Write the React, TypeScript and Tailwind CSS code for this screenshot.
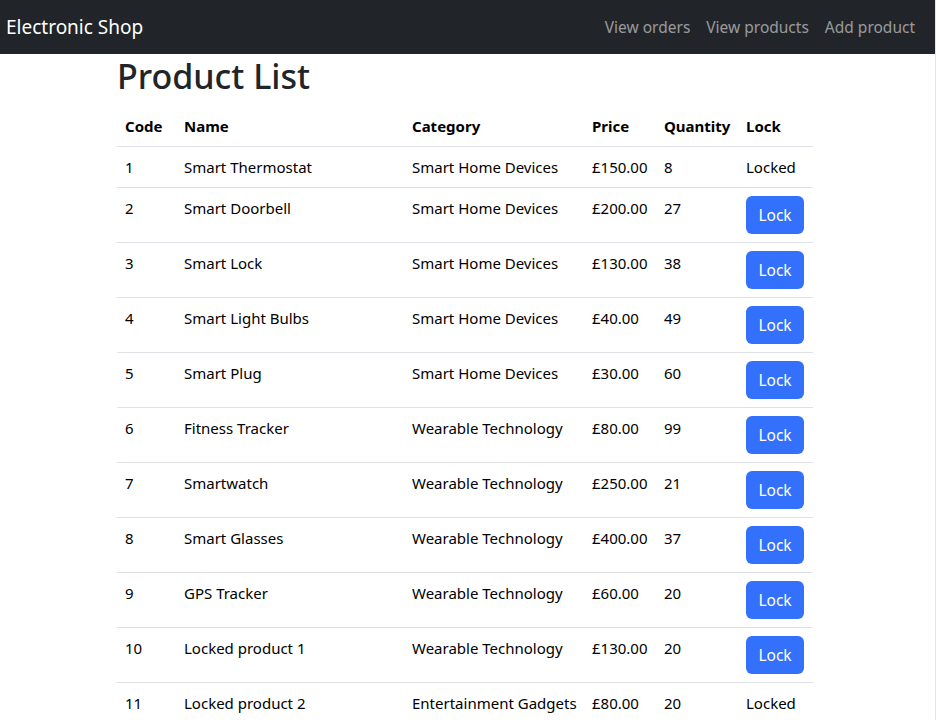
import React from "react";

interface Product {
  code: number;
  name: string;
  category: string;
  price: string;
  quantity: number;
  locked: boolean;
}

const products: Product[] = [
  { code: 1, name: "Smart Thermostat", category: "Smart Home Devices", price: "£150.00", quantity: 8, locked: true },
  { code: 2, name: "Smart Doorbell", category: "Smart Home Devices", price: "£200.00", quantity: 27, locked: false },
  { code: 3, name: "Smart Lock", category: "Smart Home Devices", price: "£130.00", quantity: 38, locked: false },
  { code: 4, name: "Smart Light Bulbs", category: "Smart Home Devices", price: "£40.00", quantity: 49, locked: false },
  { code: 5, name: "Smart Plug", category: "Smart Home Devices", price: "£30.00", quantity: 60, locked: false },
  { code: 6, name: "Fitness Tracker", category: "Wearable Technology", price: "£80.00", quantity: 99, locked: false },
  { code: 7, name: "Smartwatch", category: "Wearable Technology", price: "£250.00", quantity: 21, locked: false },
  { code: 8, name: "Smart Glasses", category: "Wearable Technology", price: "£400.00", quantity: 37, locked: false },
  { code: 9, name: "GPS Tracker", category: "Wearable Technology", price: "£60.00", quantity: 20, locked: false },
  { code: 10, name: "Locked product 1", category: "Wearable Technology", price: "£130.00", quantity: 20, locked: false },
  { code: 11, name: "Locked product 2", category: "Entertainment Gadgets", price: "£80.00", quantity: 20, locked: true },
];

export default function App() {
  return (
    <div className="min-h-screen bg-white text-[#212529] font-['Noto_Sans',sans-serif] text-[15px] leading-6 border-r border-[#e5e5e5]">
      {/* Navbar */}
      <nav className="h-[54px] bg-[#212529] flex items-center justify-between pl-[6px] pr-[12px]">
        <span className="text-white text-[19px] leading-[30px]">Electronic Shop</span>
        <div className="flex text-[15.5px]">
          <a className="px-2 text-[#ffffff8c]">View orders</a>
          <a className="px-2 text-[#ffffff8c]">View products</a>
          <a className="px-2 text-[#ffffff8c]">Add product</a>
        </div>
      </nav>

      <div className="w-[696px] ml-[117px]">
        <h1 className="text-[34px] leading-[44px] font-medium mb-2">Product List</h1>

        <table className="table-fixed w-[696px] border-collapse text-black">
          <colgroup>
            <col className="w-[59px]" />
            <col className="w-[228px]" />
            <col className="w-[180px]" />
            <col className="w-[72px]" />
            <col className="w-[82px]" />
            <col className="w-[75px]" />
          </colgroup>
          <thead>
            <tr className="border-b border-[#dee2e6]">
              <th className="text-left font-bold p-2 whitespace-nowrap">Code</th>
              <th className="text-left font-bold p-2 whitespace-nowrap">Name</th>
              <th className="text-left font-bold p-2 whitespace-nowrap">Category</th>
              <th className="text-left font-bold p-2 whitespace-nowrap">Price</th>
              <th className="text-left font-bold p-2 whitespace-nowrap">Quantity</th>
              <th className="text-left font-bold p-2 whitespace-nowrap">Lock</th>
            </tr>
          </thead>
          <tbody>
            {products.map((p) => (
              <tr key={p.code} className="border-b border-[#dee2e6] align-top">
                <td className="p-2 whitespace-nowrap">{p.code}</td>
                <td className="p-2 whitespace-nowrap">{p.name}</td>
                <td className="p-2 whitespace-nowrap">{p.category}</td>
                <td className="p-2 whitespace-nowrap">{p.price}</td>
                <td className="p-2 whitespace-nowrap">{p.quantity}</td>
                <td className="p-2 whitespace-nowrap">
                  {p.locked ? (
                    "Locked"
                  ) : (
                    <button className="h-[38px] w-[58px] rounded-[6px] bg-[#3371fc] text-white text-[15.5px]">Lock</button>
                  )}
                </td>
              </tr>
            ))}
          </tbody>
        </table>
      </div>
    </div>
  );
}
